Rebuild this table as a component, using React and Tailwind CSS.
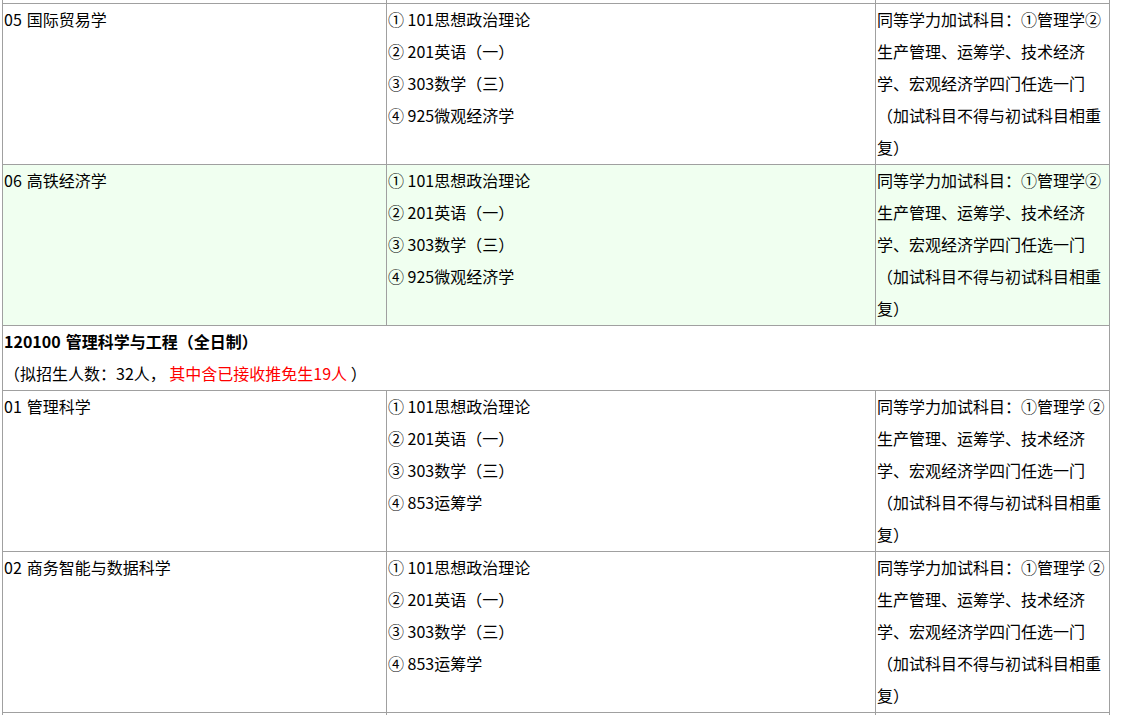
import React from "react";

const B = "border-[#a0a0a0]";

const subjects = (last) => [
  "① 101思想政治理论",
  "② 201英语（一）",
  "③ 303数学（三）",
  `④ ${last}`,
];

const extra = (space) => [
  space ? "同等学力加试科目：①管理学 ②" : "同等学力加试科目：①管理学②",
  "生产管理、运筹学、技术经济",
  "学、宏观经济学四门任选一门",
  "（加试科目不得与初试科目相重",
  "复）",
];

function Name({ code, text }) {
  return (
    <div className="-translate-y-px whitespace-nowrap">
      {code}
      <span className="inline-block w-[5px]" />
      {text}
    </div>
  );
}

function Row({ code, name, last, space, green }) {
  return (
    <div className={`flex h-[161px] border-b ${B} ${green ? "bg-[#f0fff0]" : "bg-white"}`}>
      <div className={`w-[384px] shrink-0 border-r ${B} px-[1px]`}>
        <Name code={code} text={name} />
      </div>
      <div className={`w-[489px] shrink-0 border-r ${B} px-[1px]`}>
        <div className="-translate-y-px">
          {subjects(last).map((s) => (
            <div key={s} className="whitespace-nowrap">{s}</div>
          ))}
        </div>
      </div>
      <div className={`w-[234px] shrink-0 border-r ${B} px-[1px]`}>
        <div className="-translate-y-px">
          {extra(space).map((s) => (
            <div key={s} className="whitespace-nowrap">{s}</div>
          ))}
        </div>
      </div>
    </div>
  );
}

function Stub({ h, bottom }) {
  return (
    <div className={`flex ${h} ${bottom ? `border-b ${B}` : ""} bg-white`}>
      <div className={`w-[384px] shrink-0 border-r ${B}`} />
      <div className={`w-[489px] shrink-0 border-r ${B}`} />
      <div className={`w-[234px] shrink-0 border-r ${B}`} />
    </div>
  );
}

export default function App() {
  return (
    <div
      className="h-[715px] overflow-hidden bg-white text-[16px] leading-[32px] text-black"
      style={{ fontFamily: '"Microsoft YaHei", "Noto Sans CJK SC", "Noto Sans", sans-serif' }}
    >
      <div className={`ml-[2px] w-[1108px] border-l ${B}`}>
        <Stub h="h-[4px]" bottom />
        <Row code="05" name="国际贸易学" last="925微观经济学" />
        <Row code="06" name="高铁经济学" last="925微观经济学" green />
        <div className={`h-[65px] border-b border-r ${B} bg-white px-[1px]`}>
          <div className="-translate-y-px">
            <div className="whitespace-nowrap font-bold">
              120100<span className="inline-block w-[5px]" />管理科学与工程（全日制）
            </div>
            <div className="whitespace-nowrap">
              （拟招生人数：32人， <span className="text-[#ff0000]">其中含已接收推免生19人</span> ）
            </div>
          </div>
        </div>
        <Row code="01" name="管理科学" last="853运筹学" space />
        <Row code="02" name="商务智能与数据科学" last="853运筹学" space />
        <Stub h="h-[40px]" />
      </div>
    </div>
  );
}
